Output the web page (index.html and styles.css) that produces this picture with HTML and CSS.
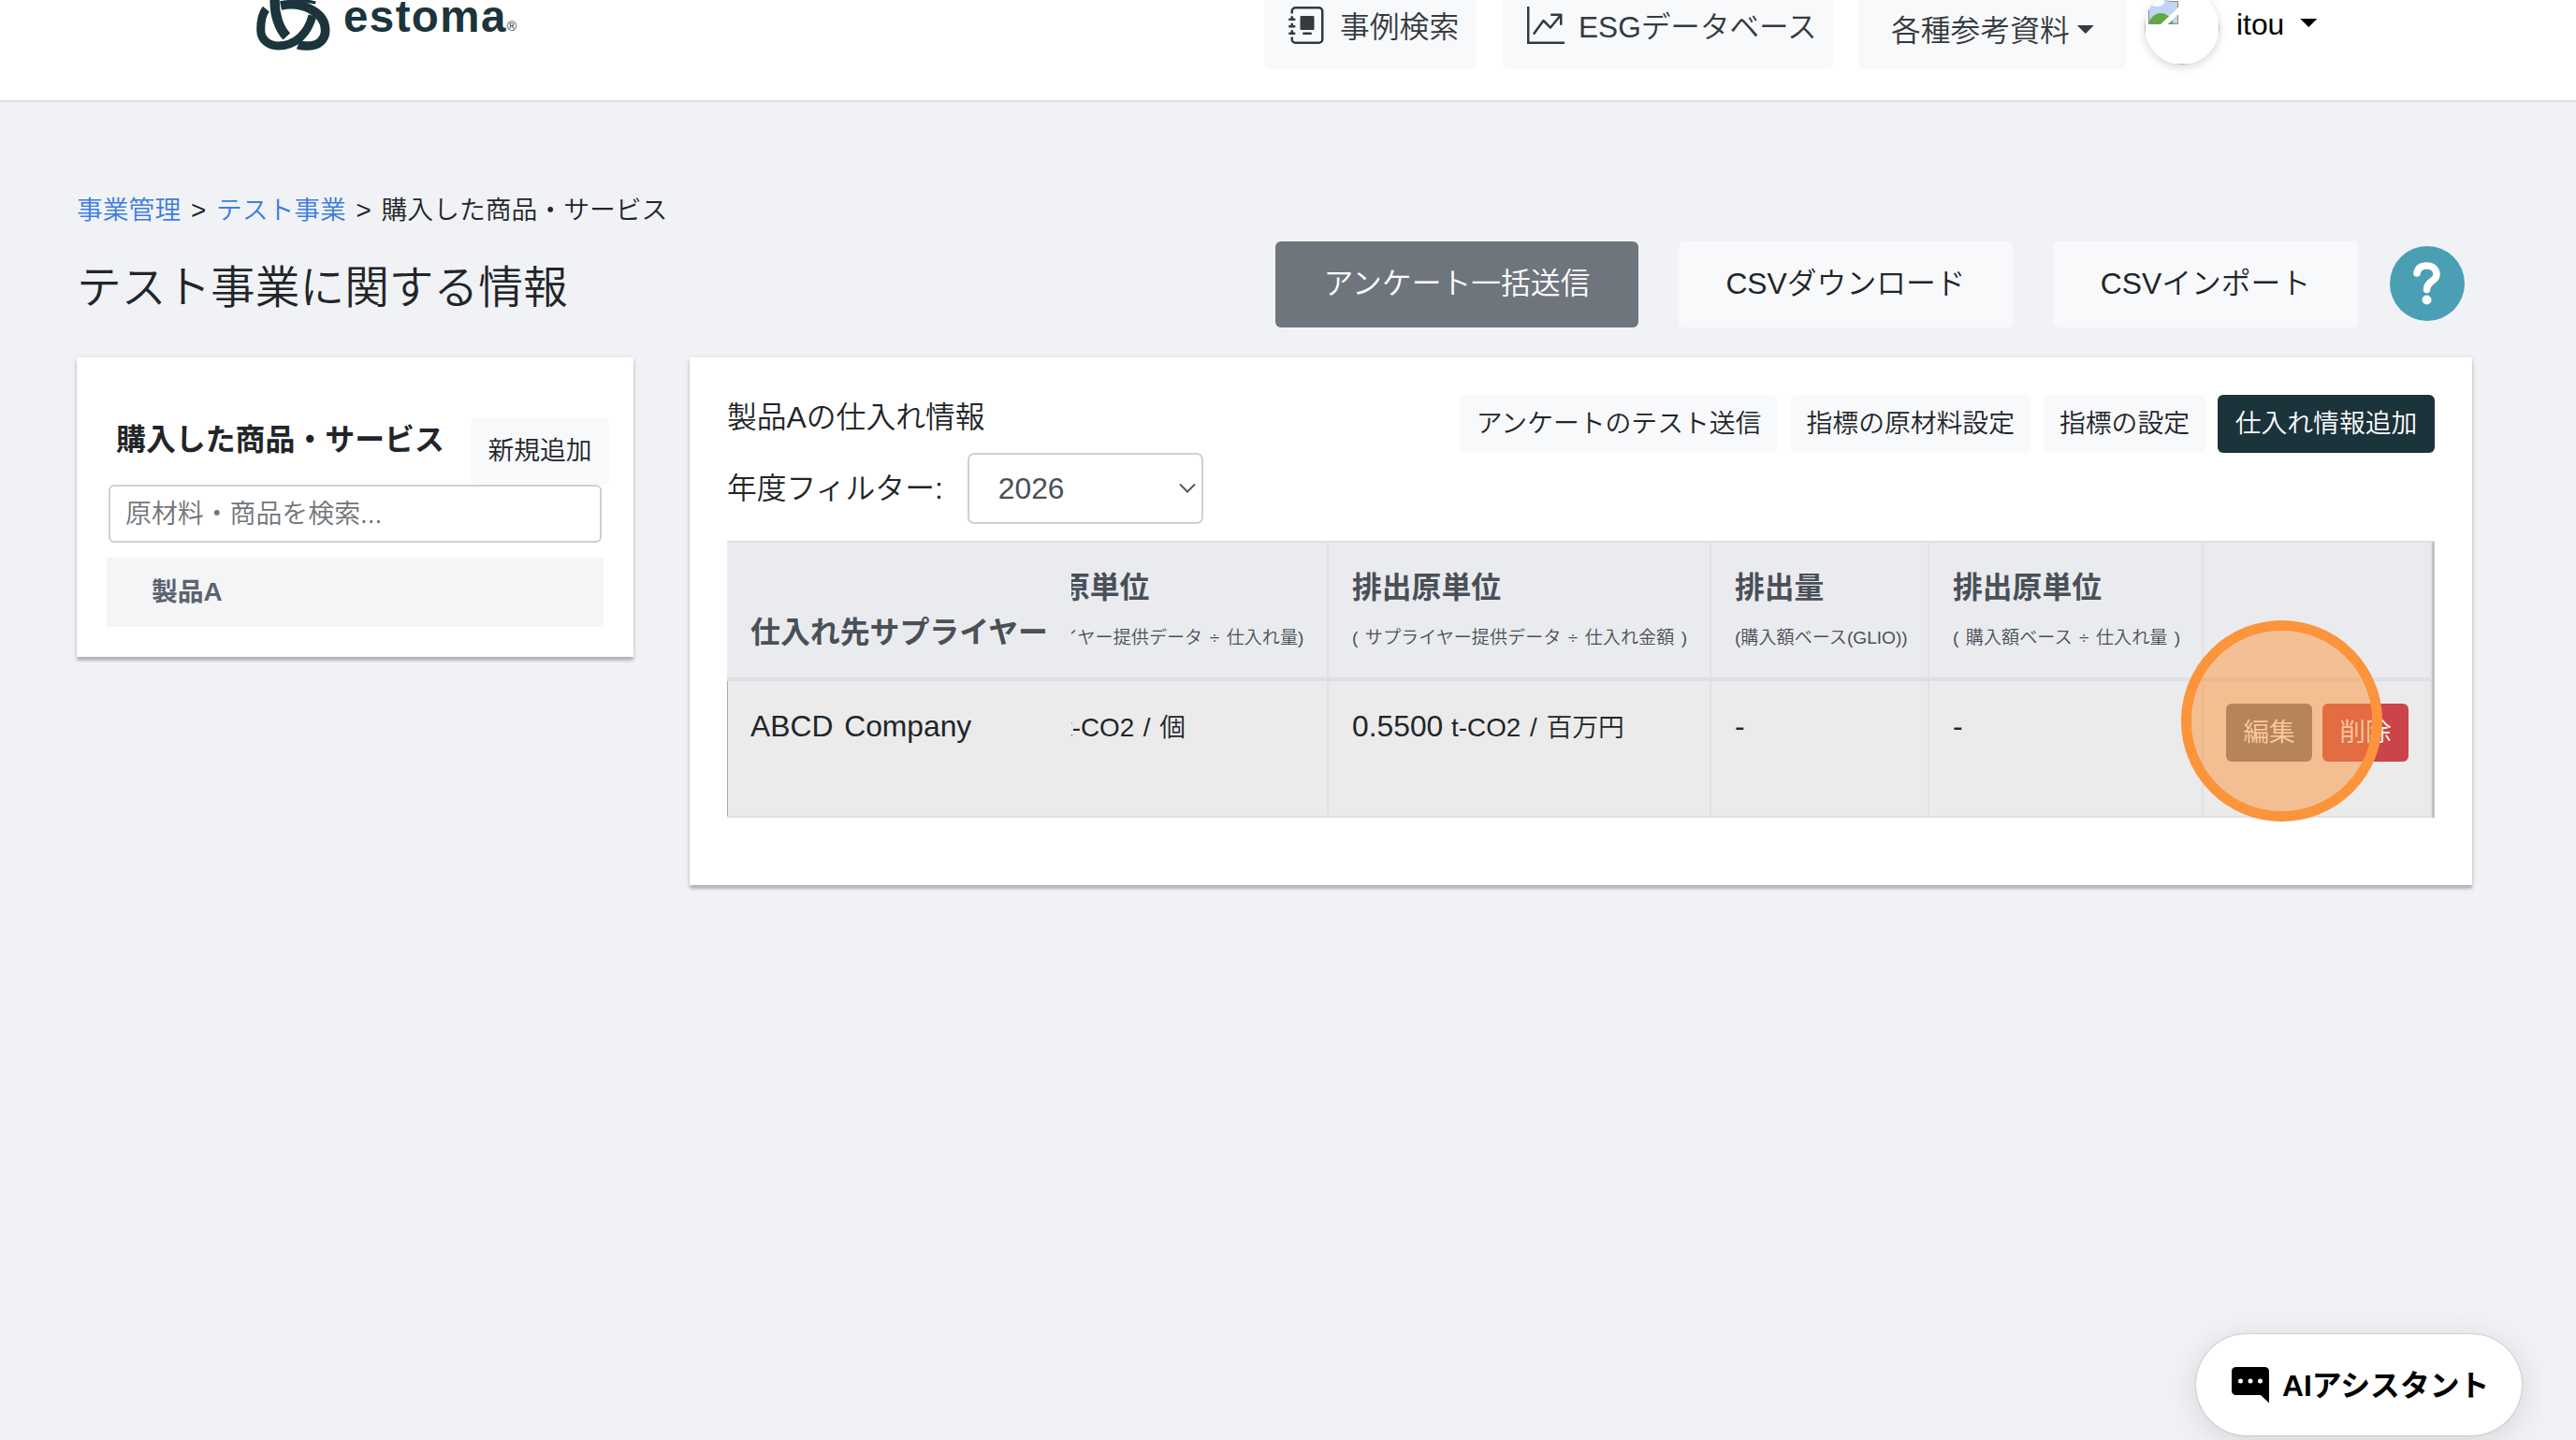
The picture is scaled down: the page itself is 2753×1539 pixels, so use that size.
FILE: index.html
```
<!DOCTYPE html>
<html lang="ja">
<head>
<meta charset="utf-8">
<title>estoma</title>
<link rel="stylesheet" href="styles.css">
</head>
<body>
<header class="header">
  <div class="brand">
    <svg class="brand-mark" width="79" height="54" viewBox="0 0 237 162" fill="none" stroke="#1c343c">
      <path stroke-width="31" d="M59-4C57 45 72 90 97 117"/>
      <path stroke-width="27" d="M31 29C18 45 14 75 14 95C14 128 40 147 69 147C125 147 165 108 180 50"/>
      <path stroke-width="29" d="M78 18C145 3 221 38 221 97C221 128 198 147 168 147C154 147 144 147 134 143"/>
      <path stroke-width="10" d="M125 0Q160 2 190 9"/>
    </svg>
    <span class="brand-name">estoma</span><span class="brand-reg">®</span>
  </div>
  <nav class="nav">
    <a class="nav-btn nav-cases">
      <svg width="40" height="40" viewBox="0 0 16 16" fill="currentColor"><path d="M5.5 4a.5.5 0 0 0-.5.5v5a.5.5 0 0 0 .5.5h5a.5.5 0 0 0 .5-.5v-5a.5.5 0 0 0-.5-.5zm1 7a.5.5 0 0 0 0 1h3a.5.5 0 1 0 0-1z"/><path d="M3 0h10a2 2 0 0 1 2 2v12a2 2 0 0 1-2 2H3a2 2 0 0 1-2-2v-1h1v1a1 1 0 0 0 1 1h10a1 1 0 0 0 1-1V2a1 1 0 0 0-1-1H3a1 1 0 0 0-1 1v1H1V2a2 2 0 0 1 2-2"/><path d="M1 5v-.5a.5.5 0 0 1 1 0V5h.5a.5.5 0 0 1 0 1h-2a.5.5 0 0 1 0-1zm0 3v-.5a.5.5 0 0 1 1 0V8h.5a.5.5 0 0 1 0 1h-2a.5.5 0 0 1 0-1zm0 3v-.5a.5.5 0 0 1 1 0v.5h.5a.5.5 0 0 1 0 1h-2a.5.5 0 0 1 0-1z"/></svg>
      <span>事例検索</span>
    </a>
    <a class="nav-btn nav-esg">
      <svg width="40" height="40" viewBox="0 0 16 16" fill="currentColor"><path d="M0 0h1v15h15v1H0zm10 3.5a.5.5 0 0 1 .5-.5h4a.5.5 0 0 1 .5.5v4a.5.5 0 0 1-1 0V4.9l-3.613 4.417a.5.5 0 0 1-.74.037L7.06 6.767l-3.656 5.027a.5.5 0 0 1-.808-.588l4-5.5a.5.5 0 0 1 .758-.06l2.609 2.61L13.445 4H10.5a.5.5 0 0 1-.5-.5"/></svg>
      <span>ESGデータベース</span>
    </a>
    <a class="nav-btn nav-docs"><span>各種参考資料</span><i class="caret"></i></a>
  </nav>
  <div class="user">
    <div class="avatar"><div class="avatar-frame">
      <svg width="32" height="36" viewBox="0 0 32 36">
        <path fill="#c3d4f2" d="M0 0H32V36H0z"/>
        <ellipse cx="9" cy="12" rx="8" ry="5" fill="#fff"/>
        <path fill="#60a943" d="M0 36C4 20 22 20 27 36z"/>
        <path fill="#fff" d="M13 36L32 18V25L21 36z"/>
        <path fill="#fff" d="M22 0H32V11H22z"/>
        <path fill="none" stroke="#8a8a8a" d="M.5 0V35.5H13M21 35.5H31.500V26M31.500 18V11.500H22"/>
      </svg>
    </div></div>
    <span class="user-name">itou</span><i class="caret"></i>
  </div>
</header>

<main class="page">
  <div class="crumbs"><a>事業管理</a> &gt; <a>テスト事業</a> &gt; 購入した商品・サービス</div>
  <div class="title-row">
    <h1>テスト事業に関する情報</h1>
    <div class="actions">
      <button class="btn-lg btn-gray">アンケート一括送信</button>
      <button class="btn-lg btn-csv-down">CSVダウンロード</button>
      <button class="btn-lg btn-csv-up">CSVインポート</button>
      <svg class="help" width="80" height="80" viewBox="0 0 80 80"><circle cx="40" cy="40" r="40" fill="#4a9fb5"/><path d="M29 29C30 23 34 21 39.500 21C46 21 50 25 50 30.500C50 38 39.500 37 39.500 46.500" fill="none" stroke="#fff" stroke-width="7.500" stroke-linecap="round"/><circle cx="39.500" cy="57.500" r="5" fill="#fff"/></svg>
    </div>
  </div>

  <div class="columns">
    <aside class="card side">
      <div class="side-head"><h2>購入した商品・サービス</h2><button class="btn-add">新規追加</button></div>
      <div class="search">原材料・商品を検索...</div>
      <div class="item">製品A</div>
    </aside>

    <section class="card main">
      <div class="main-head">
        <span class="main-title">製品Aの仕入れ情報</span>
        <div class="tools">
          <button class="btn-sm t1">アンケートのテスト送信</button>
          <button class="btn-sm t2">指標の原材料設定</button>
          <button class="btn-sm t3">指標の設定</button>
          <button class="btn-sm t4">仕入れ情報追加</button>
        </div>
      </div>
      <div class="filter">
        <span>年度フィルター:</span>
        <div class="select"><span>2026</span><svg width="18" height="12" viewBox="0 0 18 12" fill="none" stroke="#55595e" stroke-width="2"><path d="M1 1.500L9 9.500L17 1.500"/></svg></div>
      </div>
      <div class="table">
        <div class="row head">
          <div class="cell supplier">仕入れ先サプライヤー</div>
          <div class="cell clipped"><div class="shift"><b>原単位</b><small>イヤー提供データ ÷ 仕入れ量)</small></div></div>
          <div class="cell"><b>排出原単位</b><small>( サプライヤー提供データ ÷ 仕入れ金額 )</small></div>
          <div class="cell"><b>排出量</b><small>(購入額ベース(GLIO))</small></div>
          <div class="cell"><b>排出原単位</b><small>( 購入額ベース ÷ 仕入れ量 )</small></div>
          <div class="cell"></div>
        </div>
        <div class="row body">
          <div class="cell supplier">ABCD Company</div>
          <div class="cell clipped"><div class="shift-unit"><span class="unit">t-CO2 / 個</span></div></div>
          <div class="cell">0.5500 <span class="unit">t-CO2 / 百万円</span></div>
          <div class="cell">-</div>
          <div class="cell">-</div>
          <div class="cell ops"><button class="op edit">編集</button><button class="op del">削除</button></div>
        </div>
        <div class="pointer"></div>
      </div>
    </section>
  </div>
</main>

<div class="assistant">
  <svg width="40" height="39" viewBox="0 0 40 39"><path d="M5 0H35Q40 0 40 5V38.500L31 30H5Q0 30 0 25V5Q0 0 5 0z"/><g fill="#fff"><circle cx="9.500" cy="15" r="2.500"/><circle cx="20" cy="15" r="2.500"/><circle cx="30.500" cy="15" r="2.500"/></g></svg>
  <span>AIアシスタント</span>
</div>
</body>
</html>
```
FILE: styles.css
```
* { box-sizing: border-box; }
body {
  margin: 0;
  width: 2753px;
  height: 1539px;
  overflow: hidden;
  background: #f1f2f6;
  color: #212529;
  font-family: "Liberation Sans", "Noto Sans CJK JP", sans-serif;
  font-weight: 350;
  font-size: 31.8px;
  white-space: nowrap;
}
button { font: inherit; color: inherit; border: 0; padding: 0; border-radius: 6px; background: #f8f9fb; text-align: center; white-space: nowrap; }
h1, h2 { margin: 0; }

.header { display: flex; height: 109px; background: #fff; border-bottom: 2px solid #dddfe3; padding-left: 274px; }
.brand { display: flex; width: 1077px; color: #1c343c; }
.brand-mark { flex: none; }
.brand-name { margin-left: 14px; font-weight: 700; font-size: 47.5px; line-height: 35px; letter-spacing: 1.4px; }
.brand-reg { font-size: 14px; line-height: 56px; }
.nav { display: flex; gap: 28px; color: #343a40; }
.nav-btn { display: flex; height: 74px; background: #f8f9fb; border-radius: 0 0 6px 6px; line-height: 59px; }
.nav-btn svg { flex: none; margin-top: 7px; }
.nav-cases { width: 227px; padding-left: 26px; gap: 15px; }
.nav-esg { width: 353px; padding-left: 26px; gap: 15px; font-size: 31.6px; }
.nav-docs { width: 286px; margin-left: -1px; padding-left: 35px; line-height: 66px; }
.caret { width: 18px; height: 9px; background: currentColor; clip-path: polygon(0 0, 100% 0, 50% 100%); }
.nav-docs .caret { margin: 27px 0 0 8px; }
.user { display: flex; margin-left: 20px; color: #000; }
.avatar { width: 80px; height: 80px; margin-top: -11px; border-radius: 50%; overflow: hidden; background: #fff; box-shadow: 0 3px 10px rgba(0,0,0,.16); }
.avatar-frame { height: 80px; border: 1.5px solid #b5b5b5; }
.avatar svg { display: block; margin-left: 3px; }
.user-name { margin-left: 18px; line-height: 52px; }
.user .caret { margin: 20px 0 0 17px; }

.page { padding: 93px 111px 0 82px; }
.crumbs { height: 44px; line-height: 45px; font-size: 27.8px; word-spacing: 3px; }
.crumbs a { color: #3e7de0; }
.title-row { display: flex; justify-content: space-between; margin-top: 12px; }
h1 { font-weight: 350; font-size: 47.7px; line-height: 99px; }
.actions { display: flex; padding-right: 8px; }
.btn-lg { height: 92px; line-height: 91px; padding-bottom: 1px; }
.btn-gray { width: 388px; background: #6f757d; color: #fff; }
.btn-csv-down { width: 357px; margin-left: 43px; }
.btn-csv-up { width: 326px; margin-left: 43px; }
.help { margin: 5px 0 0 34px; }

.columns { display: flex; align-items: flex-start; gap: 60px; margin-top: 25px; }
.card { background: #fff; box-shadow: 0 4px 3px rgba(0,0,0,.22), 0 1px 6px rgba(0,0,0,.1); }
.side { width: 595px; height: 320px; padding: 64px 26px 0 32px; }
.side-head { display: flex; justify-content: space-between; }
h2 { margin-left: 10px; font-size: 31.9px; line-height: 48px; font-weight: 700; }
.btn-add { width: 148px; height: 72px; line-height: 70px; font-size: 27.8px; }
.search { width: 527px; height: 62px; margin-left: 2px; padding-left: 16px; border: 2px solid #cdd0d3; border-radius: 6px; line-height: 59px; font-size: 27.9px; color: #70757a; }
.item { width: 531px; height: 74px; margin-top: 16px; padding-left: 48px; background: #f4f5f7; color: #5c6370; font-size: 27.8px; font-weight: 700; line-height: 73px; }

.main { width: 1905px; height: 564px; padding: 40px 40px 0; }
.main-head { display: flex; justify-content: space-between; height: 62px; }
.main-title { line-height: 48px; }
.tools { display: flex; gap: 12.5px; }
.btn-sm { height: 62px; line-height: 61px; padding-bottom: 1px; font-size: 27.8px; }
.t1 { width: 340px; } .t2 { width: 258.5px; } .t3 { width: 174px; }
.t4 { width: 232px; background: #1b333b; color: #fff; }
.filter { display: flex; line-height: 76px; }
.select { display: flex; width: 252px; height: 76px; margin-left: 26px; padding: 0 6px 0 31px; justify-content: space-between; align-items: center; border: 2px solid #cdd0d3; border-radius: 7px; color: #495057; }

.table { position: relative; width: 1825px; margin-top: 18px; border-top: 2px solid #dddfe3; border-right: 3px solid #c2c3c5; }
.row { display: grid; grid-template-columns: 368px 275px 409px 233px 293px 244px; }
.head { height: 148px; background: #eaebef; border-bottom: 4px solid #dddfe2; color: #495057; }
.body { height: 146px; background: #ebebeb; border-bottom: 2px solid #dddfe3; line-height: 49px; }
.cell { border-right: 2px solid #dfe1e4; padding: 24px 0 0 25px; overflow: hidden; }
.cell.supplier { border-right: 0; }
.head .cell b { display: block; line-height: 48px; font-weight: 700; }
.head .cell small { display: block; margin-top: 14px; line-height: 32px; font-size: 19.1px; word-spacing: 2.2px; }
.head .supplier { padding-top: 72px; font-size: 31.9px; font-weight: 700; line-height: 48px; }
.body .supplier { border-left: 1px solid #a8a8a8; padding-left: 24px; word-spacing: 3px; }
.cell.clipped { padding-left: 0; }
.shift { margin-left: -12px; }
.unit { font-size: 27.8px; word-spacing: 2px; }
.shift-unit { margin-left: -7px; }
.cell.ops { display: flex; gap: 11px; padding-left: 24px; }
.op { width: 92px; height: 62px; font-size: 27.8px; line-height: 60px; color: #fff; }
.edit { background: #6f757d; }
.del { background: #cb444a; }
.pointer { position: absolute; left: 1554px; top: 83px; width: 215px; height: 215px; border: 11px solid #fb943a; border-radius: 50%; background: rgba(251,148,58,.5); background-clip: padding-box; }

.assistant { position: absolute; left: 2347px; top: 1426px; width: 348px; height: 108px; display: flex; gap: 14px; padding-left: 38px; border-radius: 54px; background: #fff; color: #000; font-weight: 700; line-height: 110px; box-shadow: 0 0 2px rgba(0,0,0,.3), 0 6px 36px rgba(0,0,0,.12); }
.assistant svg { flex: none; margin-top: 35px; }
```
